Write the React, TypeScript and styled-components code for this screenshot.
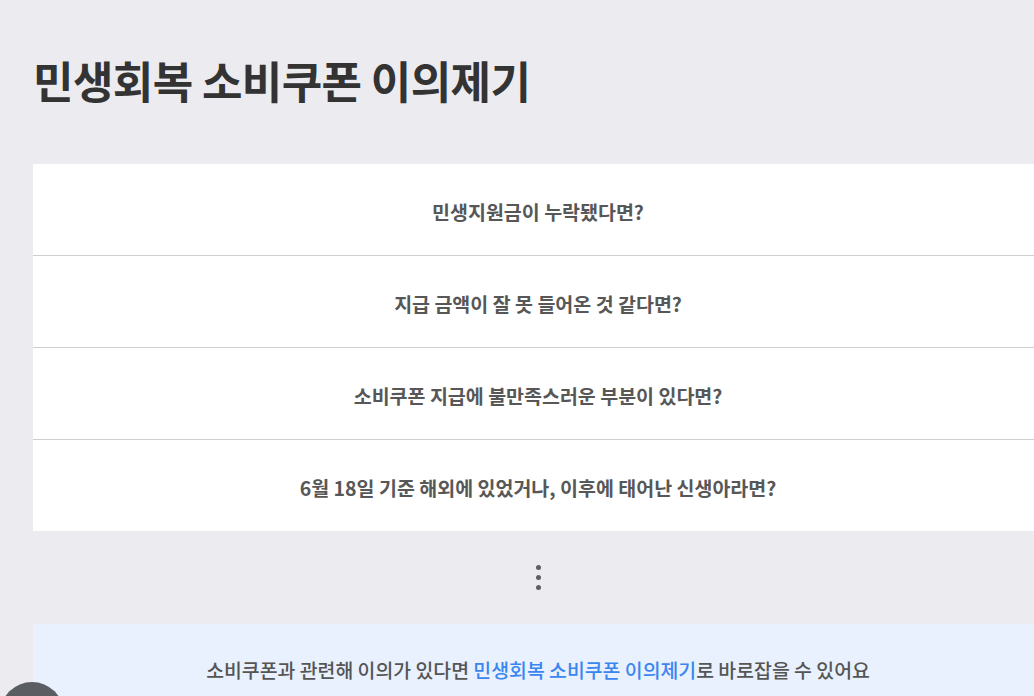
import React from "react";
import styled, { createGlobalStyle } from "styled-components";

const GlobalStyle = createGlobalStyle`
  html, body {
    margin: 0;
    padding: 0;
    background: #ecebf0;
    overflow: hidden;
  }
  body {
    font-family: "Noto Sans CJK KR", "Noto Sans", sans-serif;
  }
`;

// whole page, content column starts 33px from the left edge
const Page = styled.div`
  padding: 0 0 0 33px;
  width: 1010px;
  min-height: 696px;
`;

const Title = styled.h1`
  margin: 0;
  padding: 50px 0 0;
  height: 164px;
  box-sizing: border-box;
  font-size: 44px;
  line-height: 60px;
  font-weight: 700;
  color: #333333;
  letter-spacing: -0.6px;
`;

const QuestionList = styled.ul`
  list-style: none;
  margin: 0;
  padding: 0;
  background: #ffffff;
`;

const QuestionItem = styled.li`
  height: 91px;
  display: flex;
  align-items: center;
  justify-content: center;
  padding-top: 4px;
  box-sizing: border-box;
  font-size: 19.5px;
  font-weight: 600;
  color: #575757;
  & + & {
    height: 92px;
    border-top: 1px solid #cfcfd2;
  }
`;

const More = styled.div`
  height: 93px;
  display: flex;
  flex-direction: column;
  align-items: center;
  justify-content: center;
  gap: 5px;
`;

const Dot = styled.span`
  width: 5px;
  height: 5px;
  border-radius: 50%;
  background: #5f5f63;
`;

const Banner = styled.div`
  background: #e8f1fd;
  height: 100px;
  display: flex;
  justify-content: center;
  padding-top: 31px;
  box-sizing: border-box;
  font-size: 19.4px;
  font-weight: 500;
  color: #555555;
`;

const Highlight = styled.span`
  color: #3a86f0;
`;

const FloatingButton = styled.button`
  position: fixed;
  left: 0;
  bottom: -50px;
  width: 64px;
  height: 64px;
  border: none;
  border-radius: 50%;
  background: #5a5d62;
  padding: 0;
`;

const questions = [
  "민생지원금이 누락됐다면?",
  "지급 금액이 잘 못 들어온 것 같다면?",
  "소비쿠폰 지급에 불만족스러운 부분이 있다면?",
  "6월 18일 기준 해외에 있었거나, 이후에 태어난 신생아라면?",
];

export default function App() {
  return (
    <>
      <GlobalStyle />
      <Page>
        <Title>민생회복 소비쿠폰 이의제기</Title>
        <QuestionList>
          {questions.map((q) => (
            <QuestionItem key={q}>{q}</QuestionItem>
          ))}
        </QuestionList>
        <More>
          <Dot />
          <Dot />
          <Dot />
        </More>
        <Banner>
          <span>
            소비쿠폰과 관련해 이의가 있다면 <Highlight>민생회복 소비쿠폰 이의제기</Highlight>로 바로잡을 수 있어요
          </span>
        </Banner>
      </Page>
      <FloatingButton aria-label="menu" />
    </>
  );
}
